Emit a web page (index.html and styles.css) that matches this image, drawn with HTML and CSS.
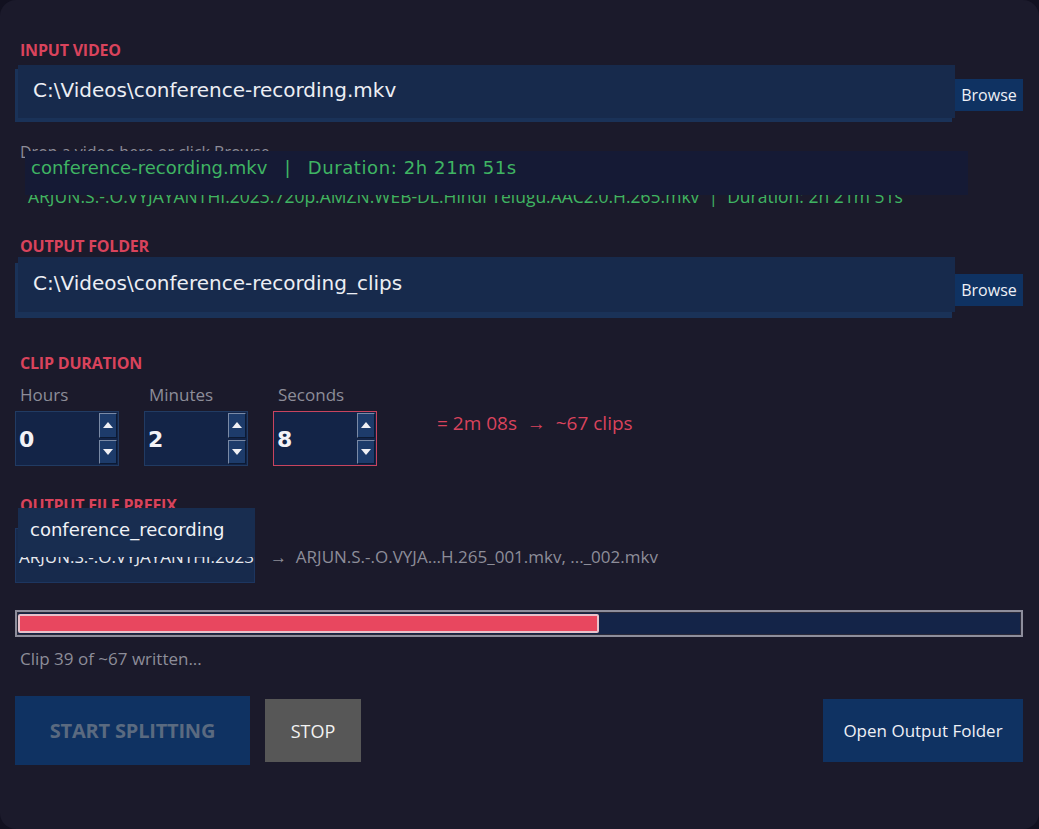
FILE: index.html
```html
<!DOCTYPE html>
<html lang="en">
<head>
    <meta charset="UTF-8">
    <meta name="viewport" content="width=device-width, initial-scale=1.0">
    <title>Video Splitter</title>
    <link rel="stylesheet" href="styles.css">
</head>
<body>
    <div class="app">
        <div class="label">INPUT VIDEO</div>
        <div class="path-row">
            <div class="entry"><span>C:\Videos\conference-recording.mkv</span></div>
            <button class="browse">Browse</button>
        </div>

        <div class="info">
            <div class="hint">Drop a video here or click Browse</div>
            <div class="meta-old">ARJUN.S.-.O.VYJAYANTHI.2023.720p.AMZN.WEB-DL.Hindi Telugu.AAC2.0.H.265.mkv &nbsp;|&nbsp; Duration: 2h 21m 51s</div>
            <div class="meta">conference-recording.mkv &nbsp; | &nbsp; <span class="duration-text">Duration: 2h 21m 51s</span></div>
        </div>

        <div class="label label-output">OUTPUT FOLDER</div>
        <div class="path-row path-row-tight">
            <div class="entry entry-tall"><span>C:\Videos\conference-recording_clips</span></div>
            <button class="browse browse-low">Browse</button>
        </div>

        <div class="label label-clip">CLIP DURATION</div>
        <div class="duration">
            <div class="spin-field">
                <div class="spin-label">Hours</div>
                <div class="spin">
                    <span class="spin-value">0</span>
                    <div class="spin-btns"><span class="up"></span><span class="down"></span></div>
                </div>
            </div>
            <div class="spin-field">
                <div class="spin-label">Minutes</div>
                <div class="spin">
                    <span class="spin-value">2</span>
                    <div class="spin-btns"><span class="up"></span><span class="down"></span></div>
                </div>
            </div>
            <div class="spin-field">
                <div class="spin-label">Seconds</div>
                <div class="spin spin-active">
                    <span class="spin-value">8</span>
                    <div class="spin-btns"><span class="up"></span><span class="down"></span></div>
                </div>
            </div>
            <div class="calc">= 2m 08s &nbsp;→&nbsp; ~67 clips</div>
        </div>

        <div class="prefix">
            <div class="label">OUTPUT FILE PREFIX</div>
            <div class="prefix-row">
                <div class="entry entry-prefix"><span>ARJUN.S.-.O.VYJAYANTHI.2023</span></div>
                <div class="preview">→ &nbsp;ARJUN.S.-.O.VYJA...H.265_001.mkv, ..._002.mkv</div>
            </div>
            <div class="prefix-box">conference_recording</div>
        </div>

        <div class="progress">
            <div class="progress-fill" style="width: 58%"></div>
        </div>
        <div class="status">Clip 39 of ~67 written...</div>

        <div class="actions">
            <button class="btn btn-start">START SPLITTING</button>
            <button class="btn btn-stop">STOP</button>
            <button class="btn btn-open">Open Output Folder</button>
        </div>
    </div>
</body>
</html>
```

FILE: styles.css
```css
body {
    margin: 0;
    padding: 0;
    background: #121120;
    font-family: "Open Sans", "Noto Sans", sans-serif;
    color: #e8e8f0;
}
.app {
    width: 1039px;
    height: 829px;
    box-sizing: border-box;
    padding: 41px 16px 0 15px;
    background: #1b1a2b;
    border-radius: 16px;
    overflow: hidden;
}
.label {
    color: #d9435c;
    font-weight: bold;
    font-size: 16px;
    line-height: 18px;
    padding-left: 5px;
    letter-spacing: -0.2px;
}
.path-row {
    display: flex;
    margin-top: 6px;
}
.path-row-tight {
    margin-top: 2px;
}
.entry {
    margin-left: 3px;
    width: 937px;
    height: 53px;
    box-sizing: border-box;
    padding-left: 15px;
    display: flex;
    align-items: center;
    background: #172a4c;
    box-shadow: -3px 4px 0 0 #1a3258;
    font-family: "DejaVu Sans", sans-serif;
    font-size: 20px;
    color: #eceef4;
    overflow: hidden;
    white-space: nowrap;
}
.entry span {
    margin-top: -4px;
}
.entry-tall {
    height: 55px;
    box-shadow: -3px 6px 0 0 #1a3258;
}
.browse {
    align-self: flex-start;
    margin-top: 14px;
    width: 68px;
    height: 32px;
    padding: 0;
    border: none;
    background: #0f3262;
    color: #eef0f6;
    font-family: "Open Sans", sans-serif;
    font-size: 16px;
}
.browse-low {
    margin-top: 17px;
}
.info {
    position: relative;
    margin-top: 23px;
    height: 68px;
}
.hint {
    font-size: 16px;
    line-height: 22px;
    color: #8d8d99;
    padding-left: 5px;
    white-space: nowrap;
}
.meta-old {
    margin-top: 23px;
    padding-left: 13px;
    font-size: 17.5px;
    line-height: 20px;
    color: #3fb463;
    white-space: nowrap;
}
.meta {
    position: absolute;
    top: 10px;
    left: 10px;
    width: 943px;
    height: 44px;
    box-sizing: border-box;
    padding: 6px 6px 0;
    background: #151a35;
    font-family: "DejaVu Sans", sans-serif;
    font-size: 18px;
    color: #3fb463;
    white-space: pre;
}
.duration-text {
    letter-spacing: 0.6px;
}
.label-output {
    margin-top: 28px;
}
.label-clip {
    margin-top: 42px;
}
.duration {
    display: flex;
    margin-top: 12px;
}
.spin-field {
    margin-right: 25px;
}
.spin-label {
    font-size: 17px;
    line-height: 22px;
    color: #8d8d99;
    padding-left: 5px;
}
.spin {
    margin-top: 5px;
    width: 104px;
    height: 55px;
    box-sizing: border-box;
    display: flex;
    justify-content: space-between;
    border: 1px solid #213b63;
    background: #132447;
}
.spin-active {
    border: 1px solid #c8445f;
}
.spin-value {
    font-family: "DejaVu Sans", sans-serif;
    font-weight: bold;
    font-size: 22px;
    padding: 15px 0 0 3px;
    color: #f2f2f6;
}
.spin-btns {
    display: flex;
    flex-direction: column;
    gap: 2px;
    padding: 1px 1px 1px 0;
}
.spin-btns span {
    width: 18px;
    flex: 1;
    box-sizing: border-box;
    background: #1d3b6a;
    border-top: 1px solid #7a8aa6;
    border-left: 1px solid #7a8aa6;
    border-bottom: 1px solid #0c1a33;
    border-right: 1px solid #0c1a33;
    display: flex;
    align-items: center;
    justify-content: center;
}
.spin-btns .up::after {
    content: "";
    border-left: 5px solid transparent;
    border-right: 5px solid transparent;
    border-bottom: 6px solid #f0f0f4;
}
.spin-btns .down::after {
    content: "";
    border-left: 5px solid transparent;
    border-right: 5px solid transparent;
    border-top: 6px solid #f0f0f4;
}
.calc {
    margin: 26px 0 0 35px;
    font-size: 19px;
    color: #d9435c;
    white-space: nowrap;
}
.prefix {
    position: relative;
    margin-top: 30px;
}
.prefix-row {
    display: flex;
    align-items: center;
    margin-top: 14px;
}
.entry-prefix {
    margin-left: 0;
    width: 240px;
    height: 55px;
    padding-left: 3px;
    box-shadow: none;
    border: 1px solid #1d3660;
    font-family: "Open Sans", sans-serif;
    font-size: 17px;
    color: #e6e8ee;
}
.entry-prefix span {
    margin-top: 2px;
}
.preview {
    margin: 2px 0 0 15px;
    font-size: 17px;
    color: #8d8d99;
    white-space: nowrap;
}
.prefix-box {
    position: absolute;
    top: 12px;
    left: 3px;
    width: 237px;
    height: 49px;
    box-sizing: border-box;
    padding: 11px 0 0 12px;
    background: #182d50;
    font-family: "DejaVu Sans", sans-serif;
    font-size: 18px;
    color: #f0f2f6;
}
.progress {
    margin-top: 27px;
    height: 27px;
    box-sizing: border-box;
    border: 2px solid #8e8e9c;
    padding: 2px 1px;
    background: #142448;
    box-shadow: inset 0 0 0 1px #2a2a3a;
}
.progress-fill {
    height: 100%;
    box-sizing: border-box;
    background: #e8475f;
    border: 2px solid #e7c2cb;
    border-radius: 2px;
}
.status {
    margin-top: 11px;
    padding-left: 5px;
    font-size: 17px;
    line-height: 22px;
    color: #8d8d99;
}
.actions {
    display: flex;
    align-items: center;
    margin-top: 26px;
}
.btn {
    border: none;
    padding: 0;
    font-family: "Open Sans", sans-serif;
}
.btn-start {
    width: 235px;
    height: 69px;
    background: #0f3262;
    color: #5a6a80;
    font-weight: bold;
    font-size: 20px;
    letter-spacing: -0.2px;
}
.btn-stop {
    margin-left: 15px;
    width: 96px;
    height: 63px;
    background: #575757;
    color: #f2f2f2;
    font-size: 18px;
}
.btn-open {
    margin-left: auto;
    width: 200px;
    height: 63px;
    background: #0f3262;
    color: #eef0f6;
    font-size: 17px;
}
```
